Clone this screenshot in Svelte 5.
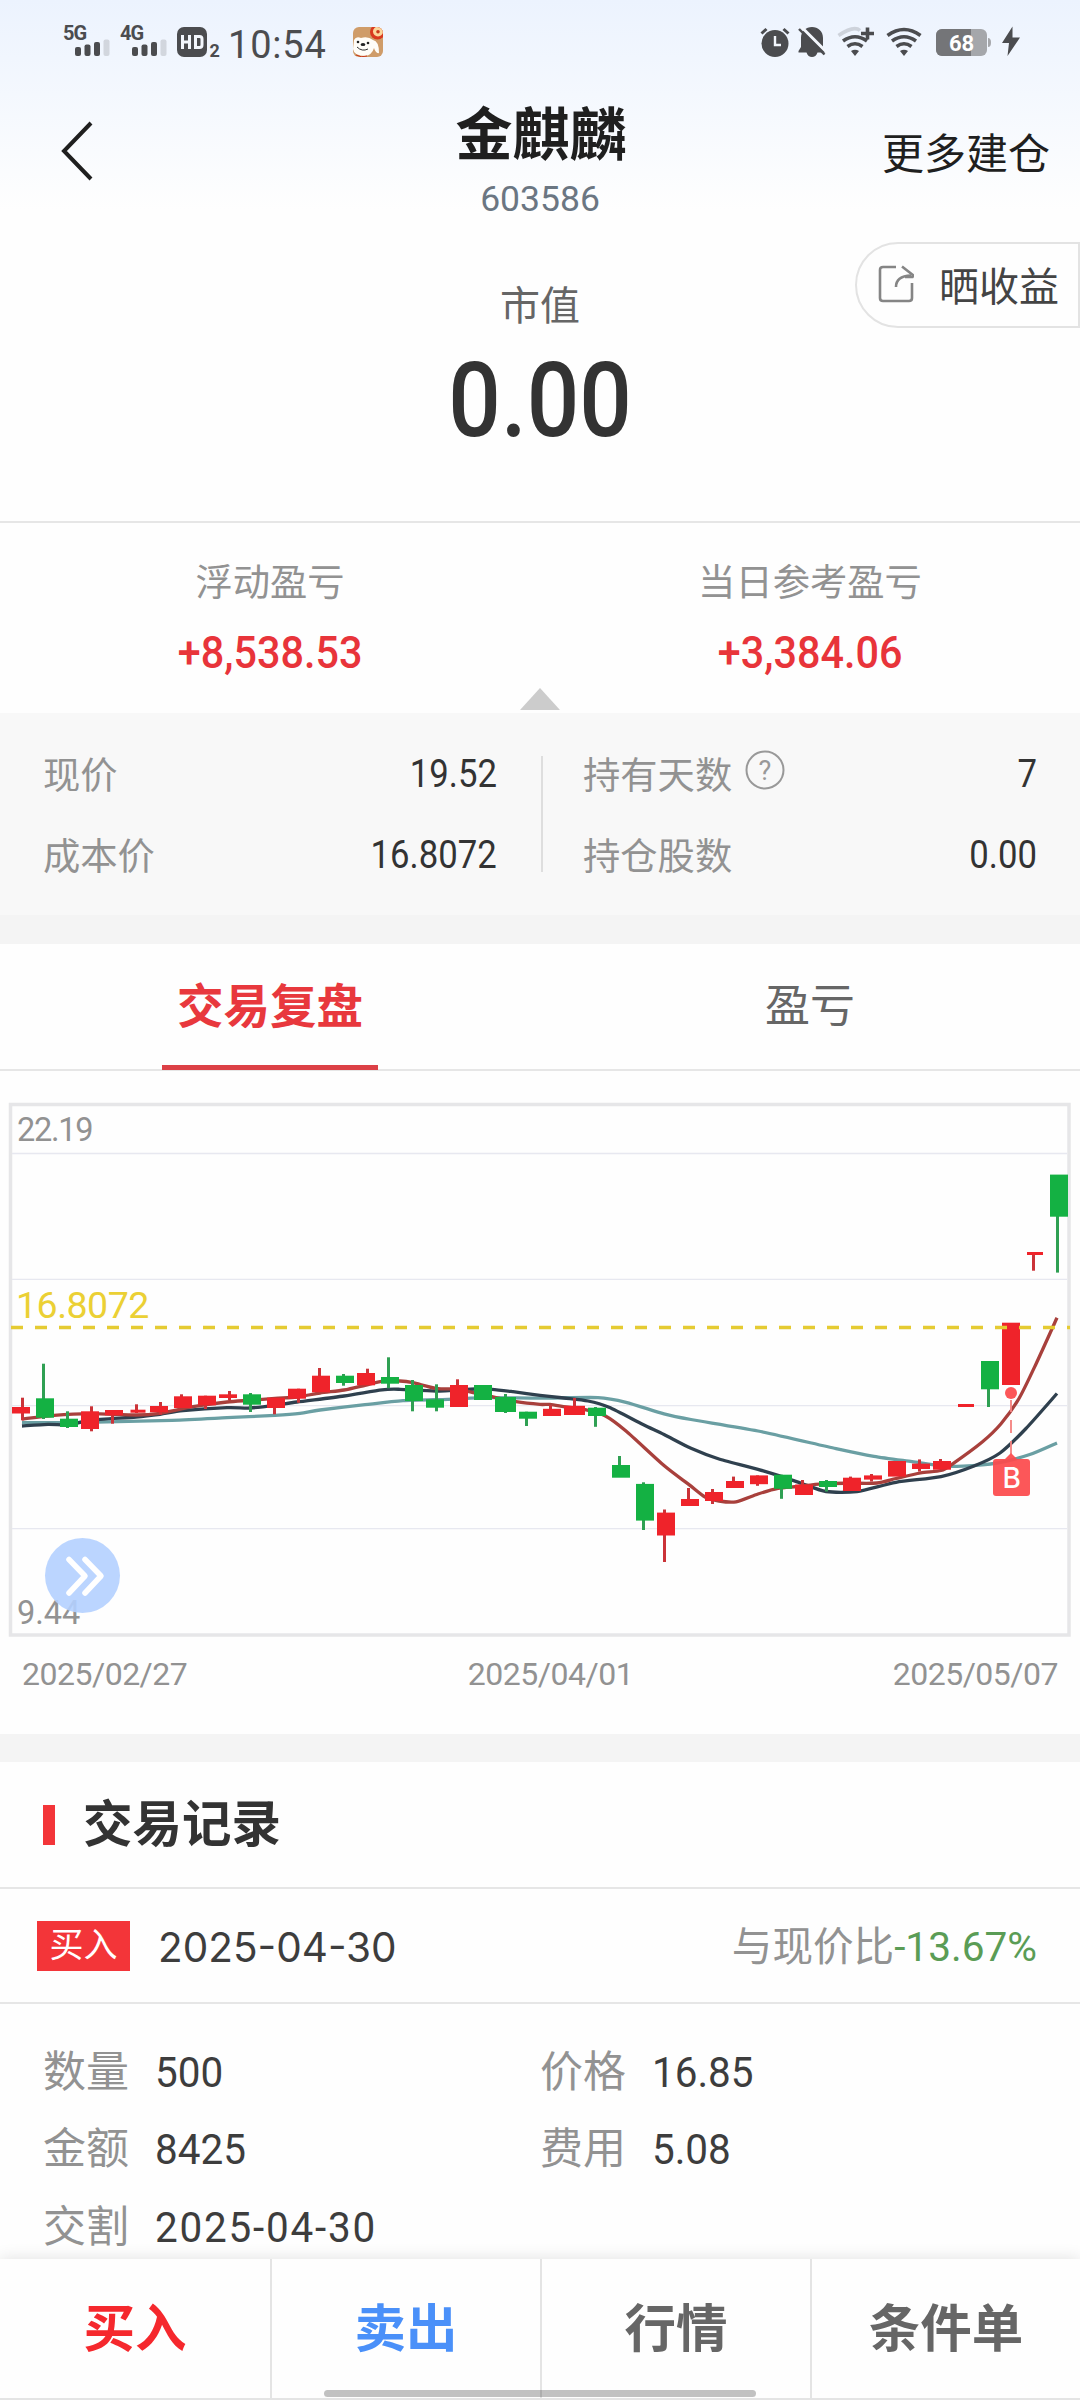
<script>
    const quotes = [
        [
            { label: '现价', value: '19.52' },
            { label: '成本价', value: '16.8072' }
        ],
        [
            { label: '持有天数', value: '7', help: true },
            { label: '持仓股数', value: '0.00' }
        ]
    ]

    const details = [
        { label: '数量', value: '500' },
        { label: '价格', value: '16.85' },
        { label: '金额', value: '8425' },
        { label: '费用', value: '5.08' },
        { label: '交割', value: '2025-04-30', wide: true }
    ]

    const actions = [
        { label: '买入', tone: 'buy' },
        { label: '卖出', tone: 'sell' },
        { label: '行情', tone: '' },
        { label: '条件单', tone: '' }
    ]

    // up, body x, body width, body top, body bottom, wick x, wick top, wick bottom
    const candles = [
        [1, 12, 18, 307, 313.5, 22.5, 297.7, 320.3],
        [0, 36, 18, 298.3, 317.7, 43.5, 263.7, 319],
        [0, 60, 18, 318.7, 327, 67.5, 311.3, 328],
        [1, 81, 18, 311.3, 329, 91.5, 306.3, 331.3],
        [1, 105, 18, 310, 315.3, 112.5, 310, 323.7],
        [1, 130.5, 15, 309.700, 312.700, 136.5, 304.3, 313],
        [1, 150, 18, 306, 312.3, 160.5, 302, 314.7],
        [1, 174, 18, 296.3, 308, 181.5, 294.3, 308],
        [1, 198, 18, 295.7, 305.3, 205.5, 295.7, 309],
        [1, 219, 18, 294.3, 298, 229.5, 291, 300.3],
        [0, 243, 18, 294.3, 304.7, 250.5, 293, 312],
        [1, 267, 18, 297.7, 308, 274.5, 297.7, 314.3],
        [1, 288, 18, 288.7, 298.7, 298.5, 288.7, 302.7],
        [1, 312, 18, 275.7, 292.3, 319.5, 268, 292],
        [0, 336, 18, 275.7, 283, 343.5, 274, 285.7],
        [1, 357, 18, 273, 285.3, 367.5, 268.7, 285],
        [0, 381, 18, 277, 283.7, 388.5, 257.3, 288.3],
        [0, 405, 18, 285, 301, 412.5, 280, 311.3],
        [0, 426, 18, 299.3, 307.7, 436.5, 284.3, 311.3],
        [1, 450, 18, 285, 307, 457.5, 279.3, 307],
        [0, 474, 18, 285, 300, 481.5, 285, 300],
        [0, 495, 21, 297, 312, 505.5, 294, 313],
        [0, 519, 18, 311.7, 318.7, 526.5, 311.7, 326],
        [1, 543, 18, 308.8, 316, 550.5, 305, 316],
        [1, 564, 21, 305.8, 315, 574.5, 298, 315],
        [0, 588, 18, 307.7, 316, 595.5, 307, 326.8],
        [0, 612, 18, 365, 377.7, 619.5, 356, 377],
        [0, 636, 18, 383.9, 420.6, 643.5, 382.3, 430],
        [1, 657, 18, 412.6, 435.5, 664.5, 409.5, 462],
        [1, 681, 18, 399, 406, 688.5, 388, 406],
        [1, 705, 18, 392, 401, 712.5, 389, 404],
        [1, 726, 18, 381, 388, 733.5, 376.6, 388],
        [1, 750, 18, 375.4, 384.2, 757.5, 375.4, 385.8],
        [0, 774, 18, 374.7, 388.8, 781.5, 374.7, 398.8],
        [1, 795, 18, 384.6, 395, 802.5, 380, 395],
        [0, 819, 18, 381, 387, 826.5, 380, 391.5],
        [1, 843, 18, 377.7, 391, 850.5, 376.6, 391],
        [1, 864, 18, 375.4, 379.6, 871.5, 374, 381.5],
        [1, 888, 18, 361, 376.6, 895.5, 361, 376],
        [1, 912, 18, 363.6, 369, 919.5, 359.4, 371.6],
        [1, 933, 18, 361, 369.7, 940.5, 359, 369],
        [1, 958, 16, 304, 307, 966, 304, 307],
        [0, 981, 18, 261, 289.3, 988.5, 261, 307],
        [1, 1002, 18, 222.7, 285, 1011, 223, 285],
        [1, 1027, 16, 152, 155, 1033.5, 153, 170.7],
        [0, 1050, 18, 74.6, 116.7, 1057.5, 75, 172.6]
    ]

    const averages = [
        {
            color: '#6a9fa3',
            points: [[22, 322.7], [86, 322.3], [172, 320.3], [227, 317.7], [275, 315.3], [300, 313.3], [320, 310], [365, 304.7], [403, 300.7], [448, 299.3], [489, 297.7], [540, 298.2], [598, 297.6], [626, 302.3], [664, 313.8], [691, 319.5], [758, 331], [836, 348.6], [874, 356.3], [912, 361.7], [939, 365.5], [963, 366.2], [998, 362.8], [1029, 354.8], [1057, 342.9]]
        },
        {
            color: '#2f404e',
            points: [[22, 326], [48, 324.3], [69, 325], [91, 320], [136, 317], [160, 314.3], [183, 310.7], [227, 307.7], [250, 308], [275, 305.3], [297, 302], [344, 296], [382, 289.8], [400, 289.3], [436, 291], [475, 289], [492, 289.3], [513, 291.7], [540, 295.3], [564, 298], [588, 301], [609, 307.3], [643, 324.5], [664, 334.5], [691, 348.3], [719, 359], [758, 369.3], [778, 375.4], [802, 383.5], [826, 391.5], [857, 391.5], [896, 382.3], [941, 376.6], [974, 366], [1000, 353], [1025.5, 329], [1057, 293.5]]
        },
        {
            color: '#a8403c',
            points: [[22, 319], [54, 315.3], [91, 313.7], [136, 315], [160, 313.3], [193, 306.7], [227, 302], [250, 300.3], [275, 298.3], [297, 297], [320, 293], [344, 290], [365, 285.3], [382, 281.3], [400, 281], [413, 282.7], [436, 288.3], [458, 289.3], [472, 292.3], [492, 296.7], [516, 301.7], [540, 304.4], [550, 304.4], [566, 307], [585, 309.6], [605, 315.7], [626, 331], [664, 365.5], [689, 384.6], [705, 397], [719, 401], [736, 401.8], [758, 394], [778, 388.4], [797, 386.5], [822, 383.8], [850, 383.2], [877, 383], [896, 378.5], [920.5, 373], [941, 370.5], [953, 363.6], [982.5, 341.8], [1001, 323.8], [1019, 298.5], [1036, 264], [1057, 217.8]]
        }
    ]

    const gridLines = [53.5, 179.3, 305.6, 428.6]

    function smooth(p) {
        let d = `M${p[0]}`
        for (let i = 0; i < p.length - 1; i++) {
            const a = p[i - 1] || p[i]
            const b = p[i]
            const c = p[i + 1]
            const e = p[i + 2] || c
            d += ` C${b[0] + (c[0] - a[0]) / 8},${b[1] + (c[1] - a[1]) / 8} ${c[0] - (e[0] - b[0]) / 8},${c[1] - (e[1] - b[1]) / 8} ${c}`
        }
        return d
    }
</script>

{#snippet signal(name)}
    <svg class="signal" width="49" height="42" viewBox="0 -8 49 42">
        <text x="1" y="17.500" font-size="20" font-weight="700" letter-spacing="-1">{name}</text>
        <rect x="13" y="25" width="6" height="9" rx="2" />
        <rect x="22.500" y="22.500" width="6" height="11.500" rx="2" />
        <rect x="32" y="20" width="6" height="14" rx="2" />
        <rect x="41.500" y="17.500" width="6" height="16.500" rx="2" opacity=".18" />
    </svg>
{/snippet}

<div class="page">
    <header>
        <div class="status">
            <div class="status-left">
                {@render signal('5G')}
                {@render signal('4G')}
                <svg class="hd" width="45" height="32" viewBox="0 0 45 32">
                    <rect width="30" height="30" rx="7" />
                    <g fill="none" stroke="#f3f7fd" stroke-width="3">
                        <path d="M5.500 8v14M12.500 8v14M5.500 15h7M18.500 9.500h4q2.500 0 2.500 2.500v6q0 2.500-2.500 2.500h-4z" />
                    </g>
                    <text x="32.500" y="29.500" font-size="18" font-weight="700">2</text>
                </svg>
                <span class="time">10:54</span>
                <svg class="dog" width="30" height="30" viewBox="0 0 30 30">
                    <clipPath id="tile"><rect width="30" height="30" rx="6" /></clipPath>
                    <g clip-path="url(#tile)">
                        <rect width="30" height="30" fill="#cf9c69" />
                        <circle cx="24.500" cy="5" r="7.500" fill="#d9391f" />
                        <circle cx="25" cy="4.500" r="5" fill="#fbd69b" />
                        <circle cx="25" cy="4.800" r="1.800" fill="#c93a1c" />
                        <path d="M1 13Q3 9 8 11Q15 9 20 13Q26 14 26 26Q23 27 21 21Q19 28 12 29Q1 29 0 22Z" fill="#fffdf8" />
                        <path d="M3 28Q8 31 14 29" stroke="#c93a1c" fill="none" />
                        <circle cx="5" cy="15" r="1.300" fill="#222" />
                        <circle cx="15" cy="16" r="1.300" fill="#222" />
                        <ellipse cx="10" cy="17.500" rx="2.400" ry="1.600" fill="#222" />
                        <path d="M4 20Q9 25 15 22" stroke="#333" stroke-width="1" fill="none" />
                    </g>
                </svg>
            </div>
            <svg class="status-right" width="262" height="34" viewBox="0 0 262 34">
                <circle cx="15" cy="18.500" r="13.500" />
                <path d="M1.500 8.500l5-4.500M23.500 4l5 4.500" stroke="#4b4c4f" stroke-width="3" />
                <path d="M15 11v9h6" fill="none" stroke="#f3f7fd" stroke-width="2.400" />
                <path d="M52 2c-6 0-11 4-11 11v9l-2.500 4v1.500h8c1 3 3 4.500 5.500 4.500s4.500-1.500 5.500-4.500h8v-1.500L63 22v-9c0-7-5-11-11-11z" />
                <path d="M41 1.500l27 27" stroke="#f3f7fd" stroke-width="3" />
                <path d="M39 4l25.500 25.500" stroke="#4b4c4f" stroke-width="2.400" />
                <g fill="none" stroke="#4b4c4f" stroke-width="3.600">
                    <path d="M78.500 10.500Q94 0 100 5.500" opacity=".2" />
                    <path d="M83 16Q95 7.500 107 16M87.500 21.500Q95 16 102.500 21.500" />
                    <path d="M101 8.500h13M107.500 2.500v12" />
                    <path d="M127.500 10.500Q144 -1.500 160.500 10.500M132 16Q144 7.500 156 16M136.500 21.500Q144 16 151.500 21.500" />
                </g>
                <path d="M91 26q4-2.500 8 0l-4 5zM140 26q4-2.500 8 0l-4 5z" />
                <clipPath id="cell"><rect x="176" y="4" width="51" height="27" rx="6" /></clipPath>
                <g clip-path="url(#cell)">
                    <rect x="176" y="4" width="51" height="27" fill="#a5a7ab" />
                    <rect x="176" y="4" width="35" height="27" fill="#747578" />
                </g>
                <path d="M228 13q3 0 3 4.500t-3 4.500z" fill="#a5a7ab" />
                <text x="201.500" y="25.500" text-anchor="middle" font-size="22" font-weight="700" fill="#fff">68</text>
                <path d="M252.500 1.500L242 18h7l-1.500 13L260 12.500h-7.500z" />
            </svg>
        </div>
        <nav>
            <svg class="back" width="40" height="64" viewBox="0 0 40 64">
                <path d="M31 4L4 32l27 28" fill="none" stroke="#1f1f1f" stroke-width="4" />
            </svg>
            <div class="title">
                <h1>金麒麟</h1>
                <span>603586</span>
            </div>
            <span class="more">更多建仓</span>
        </nav>
    </header>

    <main>
        <section class="value">
            <span class="value-label">市值</span>
            <strong><span class="din">0.00</span></strong>
            <button class="share">
                <svg width="36" height="38" viewBox="0 0 36 38">
                    <g fill="none" stroke="#858585" stroke-width="2.600">
                        <path d="M18 2H5Q2 2 2 5v28q0 3 3 3h26q3 0 3-3V18" />
                        <path d="M18 22Q18 11 33 10.500" />
                    </g>
                    <path d="M24 1.500L35.500 10.500l-1 1.500H27" fill="none" stroke="#858585" stroke-width="2.600" />
                </svg>
                晒收益
            </button>
        </section>

        <section class="profit">
            <div>
                <span>浮动盈亏</span>
                <b class="din">+8,538.53</b>
            </div>
            <div>
                <span>当日参考盈亏</span>
                <b class="din">+3,384.06</b>
            </div>
            <i class="arrow"></i>
        </section>

        <section class="quotes">
            {#each quotes as column}
                <div class="quote-column">
                    {#each column as item}
                        <div class="quote">
                            <span>{item.label}</span>
                            {#if item.help}
                                <svg width="40" height="40" viewBox="0 0 40 40">
                                    <circle cx="20" cy="20" r="18.500" fill="none" stroke="#999" stroke-width="2" />
                                    <text x="20" y="30" text-anchor="middle" font-size="27" fill="#999">?</text>
                                </svg>
                            {/if}
                            <b class="din">{item.value}</b>
                        </div>
                    {/each}
                </div>
            {/each}
        </section>

        <div class="tabs">
            <div class="tab active"><span>交易复盘</span></div>
            <div class="tab"><span>盈亏</span></div>
        </div>

        <section class="chart">
            <svg width="1080" height="540" viewBox="0 0 1080 540">
                <rect x="10.500" y="4.500" width="1058.500" height="530.500" fill="none" stroke="#e6e6e8" stroke-width="3.500" />
                {#each gridLines as y}
                    <path d="M12 {y}H1067" stroke="#e7e8f0" stroke-width="1.300" />
                {/each}
                {#each averages as line}
                    <path d={smooth(line.points)} fill="none" stroke={line.color} stroke-width="3.300" />
                {/each}
                {#each candles as [up, x, w, top, bottom, wick, high, low]}
                    <rect x={wick - 1.5} y={high} width="3" height={low - high} fill={up ? '#cb3338' : '#2fa053'} />
                    <rect {x} y={top} width={w} height={bottom - top} fill={up ? '#ef232a' : '#14b143'} />
                {/each}
                <path d="M11 227.500H1070" stroke="#e5cb32" stroke-width="3.400" stroke-dasharray="12 12" />
                <g class="marker">
                    <circle cx="1011" cy="293" r="6" />
                    <path d="M1011 300v12M1011 320v13M1011 341v14" stroke="#f58482" stroke-width="2" />
                    <path d="M1004 360l7-7l7 7z" />
                    <rect x="993" y="359" width="37" height="37" rx="3" />
                    <text x="1011.700" y="388" text-anchor="middle">B</text>
                </g>
                <text x="17" y="41.300" class="scale">22.19</text>
                <text x="16" y="218" class="cost">16.8072</text>
                <text x="17" y="524" class="scale low">9.44</text>
                <circle cx="82.500" cy="475.500" r="37.500" fill="#b4d0ff" opacity=".9" />
                <path d="M69 459.500l16 16.500l-16 17M85 459.500l16 16.500l-16 17" class="chevrons" />
            </svg>
            <div class="dates">
                <span>2025/02/27</span>
                <span>2025/04/01</span>
                <span>2025/05/07</span>
            </div>
        </section>

        <section class="records">
            <h2><span>交易记录</span></h2>
            <div class="record">
                <span class="tag">买入</span>
                <span class="date">2025-04-30</span>
                <span class="compare">与现价比<em>-13.67%</em></span>
            </div>
            <div class="details">
                {#each details as item}
                    <div><span>{item.label}</span><b class="din" class:wide={item.wide}>{item.value}</b></div>
                {/each}
            </div>
        </section>
    </main>

    <footer>
        {#each actions as action}
            <div class="action {action.tone}">{action.label}</div>
        {/each}
        <i class="home"></i>
    </footer>
</div>

<style>
    :global(body){
        margin: 0;
        background: #fefefe;
    }

    .page{
        display: flex;
        flex-direction: column;
        width: 1080px;
        height: 2400px;
        overflow: hidden;
        background: #fefefe;
        color: #333;
        font-family: Roboto, "Noto Sans CJK SC", sans-serif;
    }

    h1, h2{
        margin: 0;
    }

    b{
        font-weight: 400;
    }

    .din{
        display: inline-block;
        transform: scaleX(.89);
    }

    header{
        height: 232px;
        background: linear-gradient(#ecf3fe, #fefefe 210px);
    }

    .status{
        display: flex;
        justify-content: space-between;
        height: 84px;
        padding: 0 58px 0 62px;
        fill: #4b4c4f;
    }

    .status-left{
        display: flex;
        align-items: flex-start;
        padding-top: 14px;
    }

    .signal{
        margin-right: 8px;
    }

    .hd{
        margin: 13px 0 0 1px;
    }

    .time{
        width: 100px;
        margin: 9px 0 0 6px;
        color: #4b4c4f;
        font-size: 38px;
        line-height: 45px;
        letter-spacing: 0.8px;
    }

    .dog{
        margin: 13px 0 0 25px;
    }

    .status-right{
        margin-top: 25px;
    }

    nav{
        display: grid;
        grid-template-columns: 300px 1fr 300px;
        height: 148px;
    }

    .back{
        margin: 35px 0 0 60px;
    }

    .title{
        display: flex;
        flex-direction: column;
        align-items: center;
    }

    h1{
        margin-top: 21px;
        padding-left: 2px;
        color: #1f1f1f;
        font-size: 57px;
        line-height: 62px;
    }

    .title span{
        margin-top: 10px;
        color: #6b7682;
        font-size: 35.500px;
        line-height: 44px;
    }

    .more{
        margin: 45px 30px 0 0;
        color: #1f1f1f;
        font-size: 42px;
        line-height: 52px;
        text-align: right;
    }

    .value{
        position: relative;
        display: flex;
        flex-direction: column;
        align-items: center;
        height: 289px;
        border-bottom: 2px solid #e6e6e6;
    }

    .value-label{
        margin-top: 50px;
        color: #666;
        font-size: 40px;
        line-height: 50px;
    }

    .value strong{
        margin-top: 9px;
        font-size: 104px;
        font-weight: 500;
        line-height: 120px;
    }

    .share{
        position: absolute;
        top: 10px;
        right: 0;
        display: flex;
        align-items: center;
        gap: 25px;
        box-sizing: border-box;
        width: 225px;
        height: 86px;
        padding: 0 0 2px 21px;
        border: 2px solid #e3e3e3;
        border-radius: 43px 0 0 43px;
        background: #fefefe;
        color: #444;
        font: inherit;
        font-size: 40px;
        white-space: nowrap;
    }

    .profit{
        position: relative;
        display: flex;
        height: 190px;
    }

    .profit div{
        display: flex;
        flex: 1;
        flex-direction: column;
        align-items: center;
    }

    .profit span{
        margin-top: 35px;
        color: #929292;
        font-size: 37.300px;
        line-height: 50px;
    }

    .profit b{
        margin-top: 21px;
        color: #e8343a;
        font-size: 43.500px;
        font-weight: 500;
        line-height: 50px;
        transform: scaleX(.95);
    }

    .arrow{
        position: absolute;
        left: 520px;
        bottom: 3px;
        border: 20px solid transparent;
        border-top: 0;
        border-bottom: 22px solid #ccc;
    }

    .quotes{
        display: flex;
        height: 202px;
        border-bottom: 29px solid #f4f4f4;
        background: #f8f8f8;
    }

    .quote-column{
        display: flex;
        flex-direction: column;
        box-sizing: border-box;
        width: 541px;
        height: 116px;
        margin-top: 43px;
        padding: 0 44px 0 43px;
    }

    .quote-column + .quote-column{
        width: 539px;
        border-left: 2px solid #dedede;
        padding: 0 43px 0 40px;
    }

    .quote{
        display: flex;
        flex: none;
        align-items: center;
        height: 81px;
        margin-top: -24px;
    }

    .quote + .quote{
        margin-top: 0;
    }

    .quote span{
        color: #929292;
        font-size: 37.300px;
    }

    .quote svg{
        margin: -5px 0 0 13px;
    }

    .quote b{
        margin-left: auto;
        padding-top: 2px;
        font-size: 39px;
        transform-origin: right;
    }

    .tabs{
        display: flex;
        height: 125px;
        border-bottom: 2px solid #e6e6e6;
    }

    .tab{
        display: flex;
        flex: 1;
        justify-content: center;
        color: #666;
        font-size: 45px;
        line-height: 126px;
    }

    .tab span{
        height: 121px;
    }

    .active span{
        padding: 0 15px;
        border-bottom: 5px solid #dc4046;
        color: #e8383d;
        font-size: 46.500px;
        font-weight: 700;
    }

    .chart{
        height: 634px;
        margin-top: 29px;
        border-bottom: 28px solid #f4f4f4;
    }

    .chart svg{
        display: block;
    }

    .scale{
        fill: #929292;
        font-size: 32.500px;
        letter-spacing: -1.300px;
    }

    .low{
        letter-spacing: 0;
    }

    .cost{
        fill: #ebd034;
        font-size: 37.500px;
        letter-spacing: -.5px;
    }

    .marker{
        fill: #fc4b4d;
        opacity: .93;
    }

    .marker text{
        fill: #fff;
        font-family: Inter, sans-serif;
        font-size: 28px;
        font-weight: 500;
    }

    .chevrons{
        fill: none;
        stroke: #fff;
        stroke-width: 5.500px;
        stroke-linecap: round;
        stroke-linejoin: round;
    }

    .dates{
        display: flex;
        justify-content: space-between;
        padding: 14px 22px;
        color: #929292;
        font-size: 32px;
        line-height: 40px;
        letter-spacing: -.5px;
    }

    .dates span:nth-child(2){
        margin-left: 21px;
    }

    h2{
        display: flex;
        align-items: center;
        gap: 28px;
        height: 125px;
        padding-left: 43px;
        border-bottom: 2px solid #e6e6e6;
        font-size: 49.500px;
    }

    h2 span{
        padding-bottom: 8px;
    }

    h2::before{
        content: "";
        width: 12px;
        height: 40px;
        background: #f33539;
    }

    .record{
        display: flex;
        align-items: center;
        height: 113px;
        padding: 0 43px 0 37px;
        border-bottom: 2px solid #e6e6e6;
    }

    .tag{
        width: 93px;
        height: 50px;
        margin-right: 28px;
        background: #f33539;
        color: #fff;
        font-size: 34px;
        line-height: 49px;
        text-align: center;
    }

    .date{
        padding-top: 3px;
        color: #3d3d3d;
        font-family: Inter, sans-serif;
        font-size: 40.500px;
    }

    .compare{
        margin-left: auto;
        padding-bottom: 5px;
        color: #929292;
        font-size: 40.600px;
    }

    em{
        color: #5a9c55;
        font-style: normal;
    }

    .details{
        display: grid;
        grid-template-columns: 497px 1fr;
        grid-auto-rows: 77.500px;
        align-items: center;
        padding: 25px 43px 0;
    }

    .details span{
        display: inline-block;
        margin-right: 26px;
        color: #929292;
        font-size: 43px;
    }

    .details b{
        color: #3d3d3d;
        font-size: 43px;
        transform: scaleX(.94);
        transform-origin: left;
    }

    .details .wide{
        letter-spacing: 1.900px;
    }

    main{
        flex: 1;
        min-height: 0;
        overflow: hidden;
    }

    footer{
        position: relative;
        display: grid;
        grid-template-columns: repeat(4, 1fr);
        height: 139px;
        border-bottom: 2px solid #e4e4e4;
        background: #fefefe;
        box-shadow: 0 0 16px rgba(0, 0, 0, .12);
    }

    .action{
        border-left: 2px solid #e4e4e4;
        color: #666;
        font-size: 51.500px;
        font-weight: 700;
        line-height: 142px;
        text-align: center;
    }

    .action:first-child{
        border-left: 0;
    }

    .buy{
        color: #f5282d;
    }

    .sell{
        color: #4a90f9;
    }

    .home{
        position: absolute;
        left: 324px;
        bottom: 1px;
        width: 432px;
        height: 7px;
        border-radius: 4px;
        background: rgba(0, 0, 0, .24);
    }
</style>
